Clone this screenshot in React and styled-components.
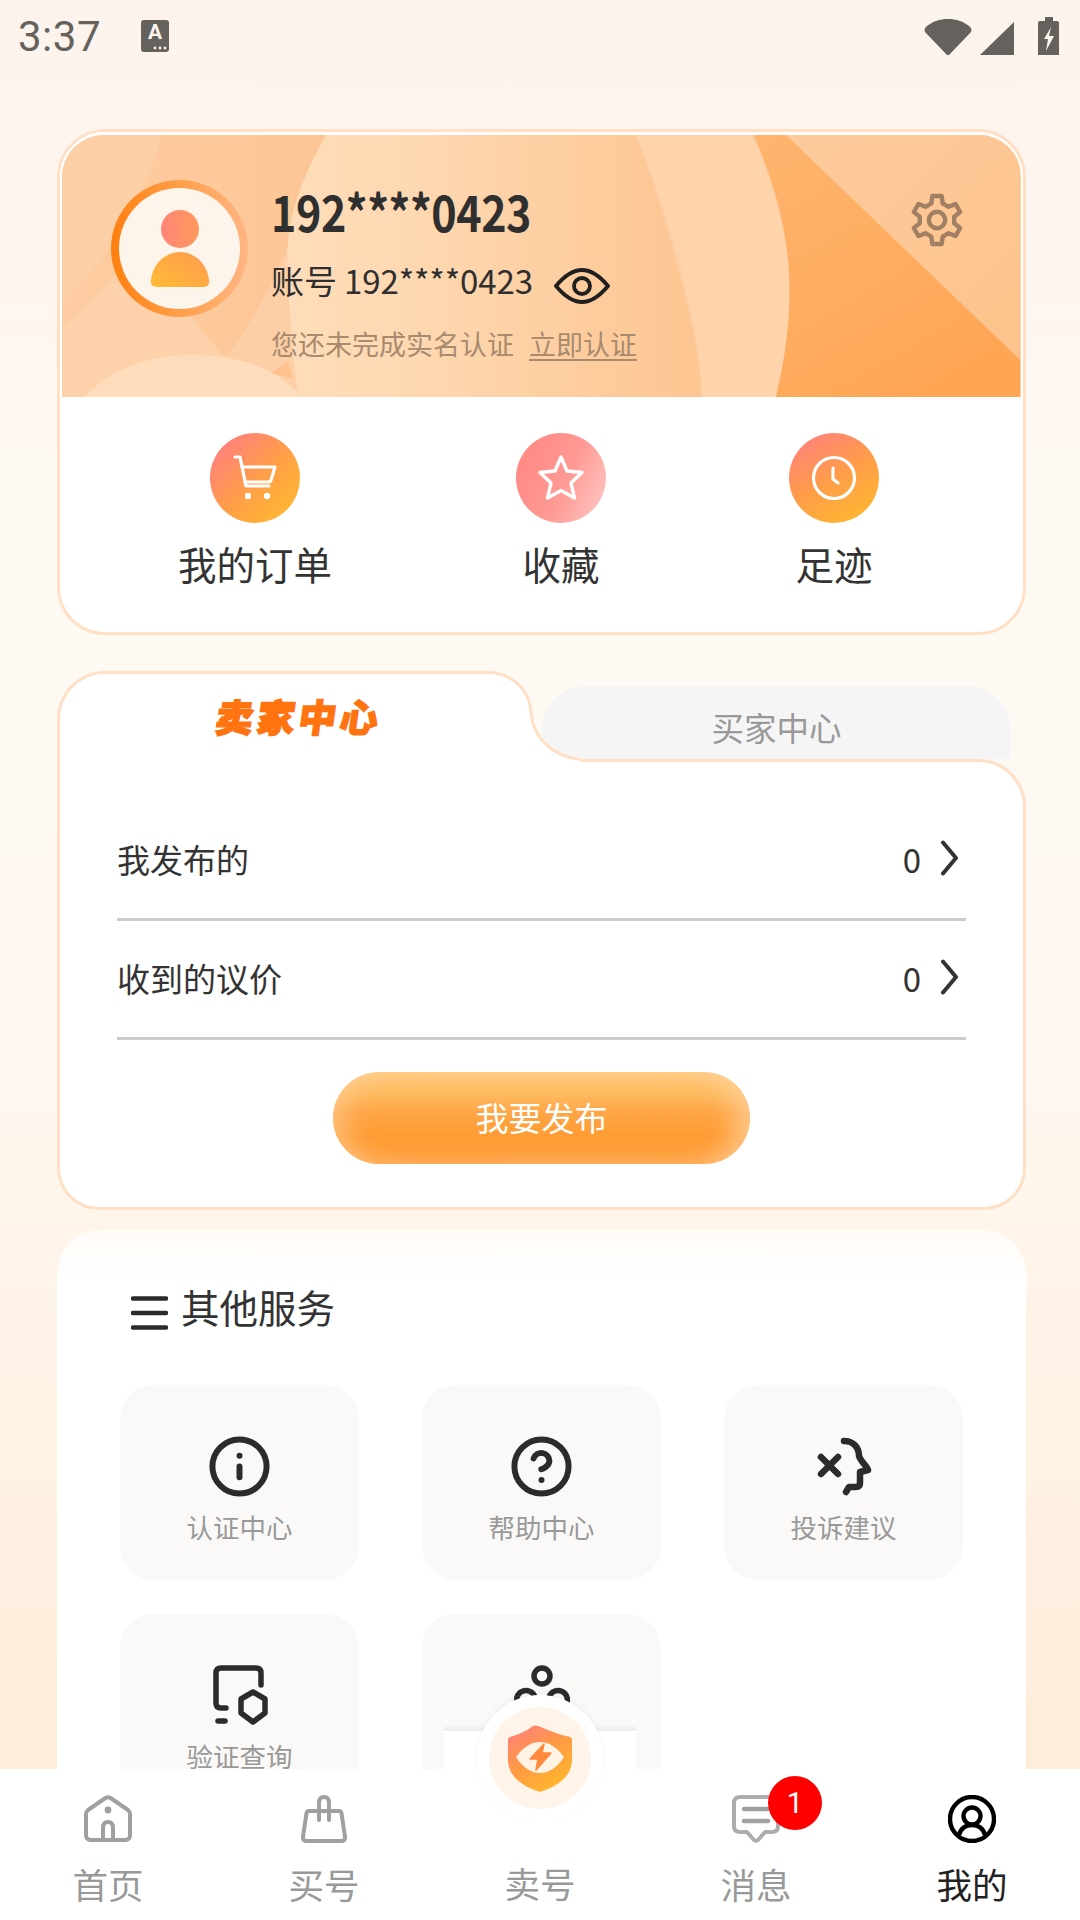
import React from "react";
import styled, { createGlobalStyle } from "styled-components";
import { Info, CircleHelp } from "lucide-react";

const Global = createGlobalStyle`
  html, body { margin: 0; padding: 0; }
  body { font-family: "Noto Sans CJK SC", "Noto Sans", sans-serif; color: #333; }
  * { box-sizing: border-box; }
`;

const Page = styled.div`
  position: relative;
  width: 1080px;
  height: 1920px;
  overflow: hidden;
  background: linear-gradient(180deg, #fdf3ed 0%, #fff9f4 30%, #fff8f1 55%, #fff3e7 70%, #fee9d5 100%);
`;

const StatusBar = styled.div`
  height: 69px;
  display: flex;
  align-items: center;
  padding: 0 21px 0 18px;
  color: #65615c;
`;
const Clock = styled.span`
  font-family: Roboto, sans-serif;
  font-size: 42px;
  line-height: 70px;
  letter-spacing: 0.5px;
  margin-top: 4px;
`;
const ImeBadge = styled.div`
  position: relative;
  width: 28px;
  height: 32px;
  margin-left: 40px;
  border-radius: 3px;
  background: #65615c;
  color: #fdf3ed;
  font-family: Roboto, sans-serif;
  font-weight: 700;
  font-size: 21px;
  line-height: 25px;
  text-align: center;
  margin-top: 2px;
`;
const StatusIcons = styled.div`
  margin-left: auto;
  display: flex;
  align-items: flex-end;
  gap: 8px;
  height: 38px;
  margin-top: 2px;
`;

const Content = styled.div`
  padding: 60px 54px 0 57px;
  display: flex;
  flex-direction: column;
`;

const ProfileCard = styled.section`
  height: 506px;
  border: 3px solid #ffe0c5;
  border-radius: 48px;
  background: #fff;
  padding: 3px 2px 2px;
  overflow: hidden;
`;
const Header = styled.header`
  position: relative;
  height: 262px;
  border-radius: 42px 42px 0 0;
  overflow: hidden;
  display: flex;
  align-items: flex-start;
  padding: 45px 57px 0 49px;
  gap: 23px;
  background: #fdd0a4;
`;
const HeaderArt = styled.svg`
  position: absolute;
  inset: 0;
`;
const Avatar = styled.div`
  position: relative;
  flex: none;
  width: 137px;
  height: 137px;
  border-radius: 50%;
  background: linear-gradient(90deg, #ff7f0e 0%, #ff9f4a 50%, #ffb683 100%);
  padding: 8px;
`;
const AvatarInner = styled.div`
  width: 100%;
  height: 100%;
  border-radius: 50%;
  background: #fdf5ec;
  display: flex;
  align-items: center;
  justify-content: center;
`;
const Details = styled.div`
  position: relative;
  display: flex;
  flex-direction: column;
  margin-top: 5px;
`;
const Phone = styled.div`
  font-size: 50px;
  font-weight: 700;
  line-height: 50px;
  color: #2f2f2f;
  letter-spacing: -0.5px;
  transform: scaleX(0.86);
  transform-origin: left center;
  white-space: nowrap;
  width: 300px;
`;
const Account = styled.div`
  display: flex;
  align-items: center;
  margin-top: 23px;
  height: 44px;
  font-size: 33px;
  color: #2f2f2f;
  letter-spacing: -0.1px;
  gap: 21px;
`;
const EyeIcon = styled.svg`
  margin-top: 12px;
`;
const Notice = styled.div`
  margin-top: 24px;
  line-height: 36px;
  font-size: 27px;
  color: #a88a6f;
  display: flex;
  gap: 15px;
`;
const NoticeLink = styled.span`
  text-decoration: underline;
  text-underline-offset: 4px;
`;
const Gear = styled.svg`
  position: relative;
  flex: none;
  margin-left: auto;
  margin-top: 13px;
`;

const Shortcuts = styled.div`
  display: grid;
  grid-template-columns: 386px 226px 320px;
  padding-top: 36px;
`;
const Shortcut = styled.div`
  display: flex;
  flex-direction: column;
  align-items: center;
`;
const ShortcutBall = styled.div`
  width: 90px;
  height: 90px;
  border-radius: 50%;
  display: flex;
  align-items: center;
  justify-content: center;
  background: ${(p) => p.$bg};
`;
const ShortcutLabel = styled.div`
  margin-top: 13px;
  font-size: 38.5px;
  line-height: 54px;
  color: #333;
`;

const SellerCard = styled.section`
  margin-top: 36px;
  display: flex;
  flex-direction: column;
`;
const TabRow = styled.div`
  position: relative;
  z-index: 1;
  display: flex;
  height: 88px;
  align-items: flex-end;
`;
const ActiveTab = styled.div`
  flex: none;
  width: 430px;
  height: 91px;
  margin-bottom: -3px;
  background: #fff;
  border: 3px solid #ffe0c5;
  border-width: 3px 0 0 3px;
  border-radius: 48px 0 0 0;
  text-align: center;
  z-index: 2;
  padding-left: 52px;
`;
const ActiveTabText = styled.span`
  display: inline-block;
  margin-top: 20px;
  font-size: 38px;
  line-height: 44px;
  font-weight: 900;
  color: #ff7410;
  letter-spacing: 3.5px;
  -webkit-text-stroke: 1.4px #ff7410;
  transform: skewX(-8deg);
`;
const Flare = styled.svg`
  flex: none;
  margin-bottom: -3px;
  z-index: 2;
`;
const IdleTab = styled.div`
  flex: none;
  width: 469px;
  height: 73px;
  margin-left: -38px;
  background: #f5f5f5;
  border-radius: 44px 44px 0 0;
  color: #999;
  font-size: 32.5px;
  line-height: 82px;
  text-align: center;
`;
const Panel = styled.div`
  height: 451px;
  background: #fff;
  border: 3px solid #ffe0c5;
  border-radius: 0 48px 42px 42px;
  padding: 40px 57px 0 57px;
  display: flex;
  flex-direction: column;
`;
const Row = styled.div`
  height: 119px;
  flex: none;
  display: flex;
  align-items: center;
  border-bottom: 3px solid #ccc;
  font-size: 33px;
  color: #333;
  padding-bottom: 2px;
`;
const RowValue = styled.span`
  margin-left: auto;
  font-size: 33px;
`;
const Chevron = styled.svg`
  margin: -2px 7px 0 19px;
`;
const PublishButton = styled.div`
  align-self: center;
  margin-top: 32px;
  width: 417px;
  height: 92px;
  flex: none;
  border-radius: 46px;
  background: linear-gradient(180deg, #ffcb80 0%, #ffbc62 22%, #ffa545 45%, #ff9c33 70%, #ffa345 100%);
  box-shadow: inset 26px 0 26px -14px rgba(255, 214, 165, 0.55), inset -26px 0 26px -12px rgba(255, 214, 165, 0.7);
  color: #fff;
  font-size: 33px;
  line-height: 90px;
  text-align: center;
`;

const ServicesCard = styled.section`
  margin-top: 20px;
  height: 700px;
  background: linear-gradient(180deg, #fffbf7 0, #fff 50px);
  border-radius: 44px 44px 0 0;
  padding: 53px 63px 0 63px;
`;
const ServicesHead = styled.div`
  display: flex;
  padding-left: 11px;
  gap: 13px;
  margin-bottom: 55px;
`;
const HeadTitle = styled.h2`
  margin: 0;
  font-size: 38.5px;
  font-weight: 400;
  line-height: 46px;
  color: #333;
`;
const Burger = styled.svg`
  flex: none;
  margin-top: 13px;
`;
const ServiceGrid = styled.div`
  display: grid;
  grid-template-columns: repeat(3, 239px);
  grid-auto-rows: 195px;
  column-gap: 63px;
  row-gap: 34px;
`;
const Tile = styled.div`
  border-radius: 34px;
  background: #faf9f7;
  display: flex;
  flex-direction: column;
  align-items: center;
  padding-top: 50px;
  color: #2b2b2b;
`;
const TileIcon = styled.div`
  height: 62px;
  display: flex;
  align-items: center;
  justify-content: center;
`;
const TileLabel = styled.div`
  margin-top: 11px;
  font-size: 26.5px;
  line-height: 38px;
  color: #999;
`;

const TabBar = styled.nav`
  position: absolute;
  left: 0;
  right: 0;
  bottom: 0;
  height: 151px;
  background: #fff;
  display: grid;
  grid-template-columns: repeat(5, 216px);
`;
const BarItem = styled.div`
  position: relative;
  display: flex;
  flex-direction: column;
  align-items: center;
  padding-top: 26px;
`;
const BarIcon = styled.div`
  position: relative;
  height: 48px;
  line-height: 0;
`;
const BarLabel = styled.div`
  margin-top: ${(p) => (p.$center ? "66px" : "19px")};
  font-size: 35.5px;
  line-height: 44px;
  color: ${(p) => (p.$active ? "#222" : "#999")};
`;
const Badge = styled.div`
  position: absolute;
  left: 36px;
  top: -19px;
  width: 54px;
  height: 54px;
  border-radius: 50%;
  background: #f00;
  color: #fff;
  font-family: Roboto, sans-serif;
  font-size: 29px;
  line-height: 54px;
  text-align: center;
`;
const CenterBase = styled.div`
  position: absolute;
  left: 444px;
  top: -44px;
  width: 192px;
  height: 44px;
  background: linear-gradient(180deg, #f8f8f6 0, #ececec 6px, #fff 6px);
`;
const CenterDome = styled.div`
  position: absolute;
  left: 477px;
  top: -74px;
  width: 126px;
  height: 126px;
  border-radius: 50%;
  background: #fff;
  box-shadow: 0 -3px 6px rgba(0, 0, 0, 0.04);
  display: flex;
  align-items: center;
  justify-content: center;
`;
const DomeInner = styled.div`
  width: 102px;
  height: 102px;
  border-radius: 50%;
  background: #fff4ea;
  display: flex;
  align-items: center;
  justify-content: center;
`;

const ball = {
  warm: "linear-gradient(135deg, #ff8378 15%, #ffa045 55%, #ffba30 95%)",
  pink: "linear-gradient(115deg, #ff8a86 15%, #ff9a94 55%, #ffc0bd 90%)",
  warm2: "linear-gradient(150deg, #ff8378 10%, #ff9d48 50%, #ffb92f 95%)",
};

const rows = [
  ["我发布的", 0],
  ["收到的议价", 0],
];

// Six-toothed cog outline around (27, 27)
const cogPath = (() => {
  const pt = (r, deg) => {
    const a = (deg * Math.PI) / 180;
    return `${(27 + r * Math.cos(a)).toFixed(2)} ${(27 + r * Math.sin(a)).toFixed(2)}`;
  };
  const cmds = [];
  for (let i = 0; i < 6; i++) {
    const c = -90 + i * 60;
    cmds.push(`${i === 0 ? "M" : "L"}${pt(17.5, c - 19)}`);
    cmds.push(`L${pt(24.5, c - 11)}`);
    cmds.push(`L${pt(24.5, c + 11)}`);
    cmds.push(`L${pt(17.5, c + 19)}`);
  }
  return cmds.join(" ") + " Z";
})();

function HeaderArtwork() {
  return (
    <HeaderArt width="958" height="262" viewBox="0 0 958 262">
      <defs>
        <linearGradient id="hdark" x1="0" y1="0" x2="1" y2="0">
          <stop offset="0" stopColor="#fdcca2" />
          <stop offset="1" stopColor="#fdc594" />
        </linearGradient>
        <linearGradient id="hblob" gradientUnits="userSpaceOnUse" x1="240" y1="0" x2="620" y2="0">
          <stop offset="0" stopColor="#ffdcb9" />
          <stop offset="0.35" stopColor="#fed7af" />
          <stop offset="1" stopColor="#fdc693" />
        </linearGradient>
        <linearGradient id="htri" x1="0" y1="0" x2="0.6" y2="1">
          <stop offset="0" stopColor="#feb56f" />
          <stop offset="1" stopColor="#ffa655" />
        </linearGradient>
        <linearGradient id="hcorner" x1="0" y1="0" x2="1" y2="1">
          <stop offset="0" stopColor="#fdcb9e" />
          <stop offset="1" stopColor="#fdc28a" />
        </linearGradient>
      </defs>
      <rect width="958" height="262" fill="#fdcfa6" />
      <path d="M100 0 H270 L224 118 C205 160 185 195 164 222 H60 L0 192 V170 C40 130 85 60 100 0 Z" fill="url(#hdark)" />
      <path d="M0 262 V192 C30 165 60 135 84 100 C110 150 130 190 164 222 L232 262 Z" fill="#fdd1aa" />
      <path d="M264 0 C236 50 222 90 226 140 C228 190 232 230 236 262 H645 C628 170 604 80 574 0 Z" fill="url(#hblob)" />
      <path d="M574 0 C608 80 634 170 640 262 H714 C738 170 730 90 690 0 Z" fill="#ffd4aa" />
      <path d="M690 0 H958 V262 H714 C738 160 730 90 690 0 Z" fill="url(#hcorner)" />
      <path d="M692 0 H724 L958 225 V262 H714 C738 160 730 90 692 0 Z" fill="url(#htri)" />
      <path d="M22 262 C50 232 90 220 130 220 C175 220 215 232 240 262 Z" fill="#ffdcbb" />
      <path d="M209 238 L226 227 L231 244 Z" fill="#ffc28e" />
    </HeaderArt>
  );
}

export default function App() {
  return (
    <Page>
      <Global />
      <StatusBar>
        <Clock>3:37</Clock>
        <ImeBadge>
          A
          <svg width="14" height="4" style={{ position: "absolute", right: 2, bottom: 2 }}>
            <circle cx="2" cy="2" r="1.4" fill="#fdf3ed" />
            <circle cx="7" cy="2" r="1.4" fill="#fdf3ed" />
            <circle cx="12" cy="2" r="1.4" fill="#fdf3ed" />
          </svg>
        </ImeBadge>
        <StatusIcons>
          <svg width="48" height="36" viewBox="0 0 48 36">
            <path d="M1 9 C8 2 16 0 24 0 C32 0 40 2 47 9 Q48 11 47 13 L25 36 H23 L1 13 Q0 11 1 9 Z" fill="#65615c" />
          </svg>
          <svg width="34" height="33" viewBox="0 0 34 33">
            <path d="M34 0 V33 H0 Z" fill="#65615c" />
          </svg>
          <svg width="21" height="38" viewBox="0 0 21 38" style={{ marginLeft: 16 }}>
            <path d="M7 0 H15 V4 H19 Q21 4 21 6 V38 H0 V6 Q0 4 2 4 H7 Z" fill="#65615c" />
            <path d="M13 10 L6 22 H10 L8 34 L16 19 H11 Z" fill="#fdf3ed" />
          </svg>
        </StatusIcons>
      </StatusBar>

      <Content>
        <ProfileCard>
          <Header>
            <HeaderArtwork />
            <Avatar>
              <AvatarInner>
                <svg width="60" height="77" viewBox="0 0 60 77">
                  <defs>
                    <linearGradient id="ahead" x1="0" y1="0" x2="1" y2="0">
                      <stop offset="0" stopColor="#ff8478" />
                      <stop offset="1" stopColor="#ff9a5c" />
                    </linearGradient>
                    <linearGradient id="abody" x1="1" y1="0" x2="0" y2="1">
                      <stop offset="0" stopColor="#ff9a4f" />
                      <stop offset="1" stopColor="#ffbb35" />
                    </linearGradient>
                  </defs>
                  <circle cx="30" cy="19" r="19" fill="url(#ahead)" />
                  <path d="M1 70 C3 52 17 42 30 42 C43 42 57 52 59 70 C60 75 57 77 53 77 H7 C3 77 0 75 1 70 Z" fill="url(#abody)" />
                </svg>
              </AvatarInner>
            </Avatar>
            <Details>
              <Phone>192****0423</Phone>
              <Account>
                <span>账号 192****0423</span>
                <EyeIcon width="56" height="36" viewBox="0 0 56 36" fill="none" stroke="#1f1f1f" strokeWidth="3.8">
                  <path d="M2 18 C12 6 20 2 28 2 C36 2 44 6 54 18 C44 30 36 34 28 34 C20 34 12 30 2 18 Z" />
                  <circle cx="28" cy="18" r="8" />
                </EyeIcon>
              </Account>
              <Notice>
                <span>您还未完成实名认证</span>
                <NoticeLink>立即认证</NoticeLink>
              </Notice>
            </Details>
            <Gear width="54" height="54" viewBox="0 0 54 54" fill="none" stroke="#a07f63" strokeWidth="4.4" strokeLinejoin="round">
              <path d={cogPath} />
              <circle cx="27" cy="27" r="8.2" />
            </Gear>
          </Header>
          <Shortcuts>
            <Shortcut>
              <ShortcutBall $bg={ball.warm}>
                <svg width="44" height="48" viewBox="0 0 44 48" fill="none" stroke="#fff" strokeWidth="3.2" strokeLinecap="round" strokeLinejoin="round">
                  <path d="M2 3 H7 L13 32 H36" />
                  <path d="M9 13 H42 L38 26 Q37.5 28 35 28 H12" />
                  <circle cx="15" cy="42" r="1.6" fill="#fff" />
                  <circle cx="34" cy="42" r="1.6" fill="#fff" />
                </svg>
              </ShortcutBall>
              <ShortcutLabel>我的订单</ShortcutLabel>
            </Shortcut>
            <Shortcut>
              <ShortcutBall $bg={ball.pink}>
                <svg width="48" height="48" viewBox="0 0 48 48" fill="none" stroke="#fff" strokeWidth="3.4" strokeLinejoin="round">
                  <path d="M24 3 L30 17 L45 18.5 L34 29 L37.5 44 L24 36.5 L10.5 44 L14 29 L3 18.5 L18 17 Z" />
                </svg>
              </ShortcutBall>
              <ShortcutLabel>收藏</ShortcutLabel>
            </Shortcut>
            <Shortcut>
              <ShortcutBall $bg={ball.warm2}>
                <svg width="46" height="46" viewBox="0 0 46 46" fill="none" stroke="#fff" strokeWidth="3.2" strokeLinecap="round" strokeLinejoin="round">
                  <circle cx="23" cy="23" r="20.5" />
                  <path d="M22 13 V24 L27 28" />
                </svg>
              </ShortcutBall>
              <ShortcutLabel>足迹</ShortcutLabel>
            </Shortcut>
          </Shortcuts>
        </ProfileCard>

        <SellerCard>
          <TabRow>
            <ActiveTab>
              <ActiveTabText>卖家中心</ActiveTabText>
            </ActiveTab>
            <Flare width="93" height="91" viewBox="0 0 93 91">
              <path d="M0 1.5 C24 1.5 43 18 44 42 C46 66 64 85 93 88.5 V91 H0 Z" fill="#fff" />
              <path d="M0 1.5 C24 1.5 43 18 44 42 C46 66 64 85 93 88.5" fill="none" stroke="#ffe0c5" strokeWidth="3" />
            </Flare>
            <IdleTab>买家中心</IdleTab>
          </TabRow>
          <Panel>
            {rows.map(([label, value]) => (
              <Row key={label}>
                <span>{label}</span>
                <RowValue>{value}</RowValue>
                <Chevron width="19" height="36" viewBox="0 0 19 36" fill="none" stroke="#333" strokeWidth="4" strokeLinecap="round" strokeLinejoin="round">
                  <path d="M3 2.5 L16 18 L3 33.5" />
                </Chevron>
              </Row>
            ))}
            <PublishButton>我要发布</PublishButton>
          </Panel>
        </SellerCard>

        <ServicesCard>
          <ServicesHead>
            <Burger width="37" height="34" viewBox="0 0 37 34" stroke="#2b2b2b" strokeWidth="4.4" strokeLinecap="round">
              <path d="M2 2.5 H35 M2 17 H35 M2 31.5 H35" />
            </Burger>
            <HeadTitle>其他服务</HeadTitle>
          </ServicesHead>
          <ServiceGrid>
            <Tile>
              <TileIcon>
                <Info size={65} strokeWidth={2.2} />
              </TileIcon>
              <TileLabel>认证中心</TileLabel>
            </Tile>
            <Tile>
              <TileIcon>
                <CircleHelp size={65} strokeWidth={2.2} />
              </TileIcon>
              <TileLabel>帮助中心</TileLabel>
            </Tile>
            <Tile>
              <TileIcon>
                <svg width="56" height="60" viewBox="0 0 56 60" fill="none" stroke="#2b2b2b" strokeWidth="6.5" strokeLinecap="round" strokeLinejoin="round">
                  <path d="M5 21 L22 38 M22 21 L5 38" />
                  <path d="M28 5 C38 5 43 12 43 20 C45 26 51 30 52 34 L44 36 V47 Q44 51 40 51 H33 L30 56" />
                </svg>
              </TileIcon>
              <TileLabel>投诉建议</TileLabel>
            </Tile>
            <Tile>
              <TileIcon>
                <svg width="58" height="60" viewBox="0 0 58 60" fill="none" stroke="#2b2b2b" strokeWidth="5.5" strokeLinecap="round" strokeLinejoin="round">
                  <path d="M50 20 V8 Q50 3 45 3 H10 Q5 3 5 8 V38 Q5 43 10 43 H15" />
                  <path d="M7 56 H14" />
                  <path d="M42 27 L54 34 V48 L42 57 L30 48 V34 Z" />
                </svg>
              </TileIcon>
              <TileLabel>验证查询</TileLabel>
            </Tile>
            <Tile>
              <TileIcon>
                <svg width="56" height="60" viewBox="0 0 56 60" fill="none" stroke="#2b2b2b" strokeWidth="5.5" strokeLinecap="round">
                  <circle cx="28" cy="11" r="8" />
                  <circle cx="12" cy="35" r="9.5" />
                  <circle cx="44" cy="35" r="9.5" />
                </svg>
              </TileIcon>
            </Tile>
          </ServiceGrid>
        </ServicesCard>
      </Content>

      <TabBar>
        <CenterBase />
        <CenterDome>
          <DomeInner>
            <svg width="64" height="67" viewBox="0 0 64 67">
              <defs>
                <linearGradient id="shield" x1="0.1" y1="0" x2="0.75" y2="1">
                  <stop offset="0" stopColor="#ff7f7c" />
                  <stop offset="0.5" stopColor="#ff9b42" />
                  <stop offset="1" stopColor="#ffb92c" />
                </linearGradient>
              </defs>
              <path d="M2 12 C10 10 20 5 25 1 Q27 0 30 1 C40 5 52 10 62 12 Q64 12.5 64 15 V35 C64 52 48 62 32 67 C16 62 0 52 0 35 V15 Q0 12.5 2 12 Z" fill="url(#shield)" />
              <path d="M8 32 C16 21 24 17 32 17 C40 17 48 21 56 32 C48 44 40 48 32 48 C24 48 16 44 8 32 Z" fill="#fff3e6" />
              <path d="M36 19 L22 34 H30 L28 45 L43 28 H34 Z" fill="#ff8a3c" stroke="#ff8a3c" strokeWidth="1.5" strokeLinejoin="round" />
            </svg>
          </DomeInner>
        </CenterDome>
        <BarItem>
          <BarIcon>
            <svg width="48" height="48" viewBox="0 0 48 48" fill="none" stroke="#a0a0a0" strokeWidth="4" strokeLinejoin="round" strokeLinecap="round">
              <path d="M21.5 3 Q24 1.5 26.5 3 L44 15 Q46 16.5 46 19 V40 Q46 45 41 45 H7 Q2 45 2 40 V19 Q2 16.5 4 15 Z" />
              <path d="M19 45 V33 Q19 27 24 27 Q29 27 29 33 V45" />
              <circle cx="24" cy="15" r="1.4" fill="#a0a0a0" />
            </svg>
          </BarIcon>
          <BarLabel>首页</BarLabel>
        </BarItem>
        <BarItem>
          <BarIcon>
            <svg width="46" height="48" viewBox="0 0 46 48" fill="none" stroke="#a0a0a0" strokeWidth="4" strokeLinejoin="round" strokeLinecap="round">
              <path d="M8 16 H38 Q40 16 40.5 18 L44 42 Q44.5 46 40 46 H6 Q1.5 46 2 42 L5.5 18 Q6 16 8 16 Z" />
              <path d="M18 25 V8 Q18 2 23 2 Q28 2 28 8 V25" />
            </svg>
          </BarIcon>
          <BarLabel>买号</BarLabel>
        </BarItem>
        <BarItem>
          <BarLabel $center>卖号</BarLabel>
        </BarItem>
        <BarItem>
          <BarIcon>
            <svg width="48" height="48" viewBox="0 0 48 48" fill="none" stroke="#adadad" strokeWidth="4" strokeLinejoin="round" strokeLinecap="round">
              <path d="M8 2 H40 Q46 2 46 8 V31 Q46 37 40 37 H33 L26 45 Q24 46.5 22 45 L15 37 H8 Q2 37 2 31 V8 Q2 2 8 2 Z" />
              <path d="M12 14 H36 M12 26 H36" stroke="#a0a0a0" strokeWidth="4.5" />
            </svg>
            <Badge>1</Badge>
          </BarIcon>
          <BarLabel>消息</BarLabel>
        </BarItem>
        <BarItem>
          <BarIcon>
            <svg width="48" height="48" viewBox="0 0 48 48" fill="none" stroke="#000" strokeWidth="4.4">
              <circle cx="24" cy="24" r="22" />
              <circle cx="24" cy="21" r="8.5" />
              <path d="M11 40 C13 33 18 30 24 30 C30 30 35 33 37 40" />
            </svg>
          </BarIcon>
          <BarLabel $active>我的</BarLabel>
        </BarItem>
      </TabBar>
    </Page>
  );
}
